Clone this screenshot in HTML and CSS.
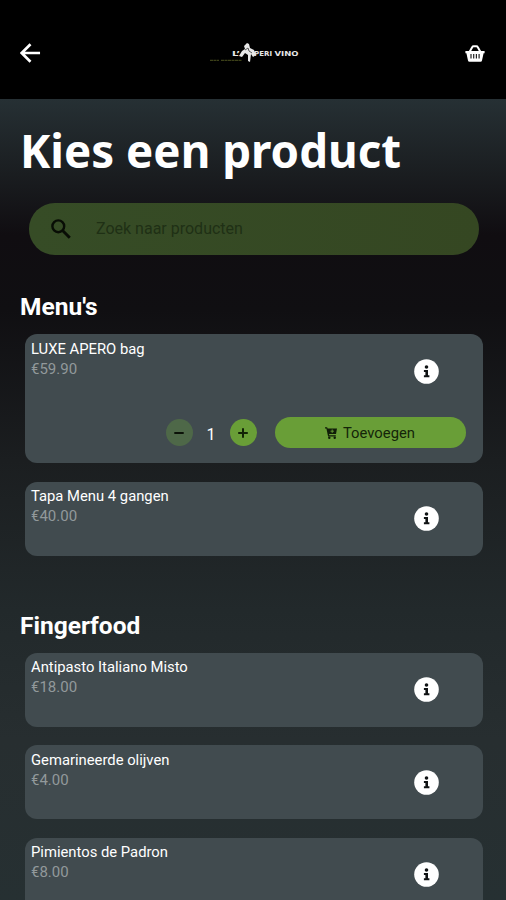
FILE: index.html
```html
<!DOCTYPE html>
<html lang="nl">
<head>
<meta charset="utf-8">
<title>Kies een product</title>
<link rel="stylesheet" href="styles.css">
</head>
<body>
<svg class="defs" aria-hidden="true">
  <symbol id="info" viewBox="0 0 25 25">
    <circle cx="12.5" cy="12.5" r="12.3" fill="#fff"/>
    <circle cx="12.5" cy="8" r="1.8" fill="#101314"/>
    <path d="M9.9 10.900h4.100v5.400h1.400v2H9.900v-2h1.500v-3.300H9.900z" fill="#101314"/>
  </symbol>
</svg>
<header class="topbar">
  <svg class="back" viewBox="0 0 22 22"><path d="M21 11H2.500M11 1.800 1.800 11l9.200 9.200" fill="none" stroke="#fff" stroke-width="2.800"/></svg>
  <svg class="logo" viewBox="0 0 92 24">
    <text class="logo-word" x="23" y="15.200" textLength="8" lengthAdjust="spacingAndGlyphs">L’</text>
    <path d="M30 15l3-5 3-2-1-3 3-3 2 1 1 4 4 2 2 5-3 2-2-3-1 8-2-1v-6l-3-2-3 4z" fill="#e8e8e8"/>
    <path d="M36 9l3-2 1 3 3 2" fill="none" stroke="#555" stroke-width="1"/>
    <text class="logo-word" x="45" y="15.200" textLength="18" lengthAdjust="spacingAndGlyphs">PERI</text>
    <text class="logo-word" x="65.500" y="15.200" textLength="24" lengthAdjust="spacingAndGlyphs">VINO</text>
    <path d="M1 19.300h9M12 19.300h21" stroke="#4b501e" stroke-width="1" stroke-dasharray="3 .5"/>
  </svg>
  <svg class="basket" viewBox="0 0 20 18"><path d="M4.500 7 7.300 2Q7.700 1.200 8.600 1.200h2.800q.9 0 1.300.8L15.500 7" fill="none" stroke="#fff" stroke-width="2"/><path d="M.4 6h19.200v2.300h-1L17 15.500q-.2 1.300-1.500 1.300h-11Q3.200 16.800 3 15.500L1.400 8.300h-1z" fill="#fff"/><path d="M6 9v4.500M8.700 9v4.500M11.400 9v4.500M14.100 9v4.500" stroke="#222" stroke-width="1.200"/></svg>
</header>
<main>
  <h1>Kies een product</h1>
  <label class="search">
    <svg viewBox="0 0 20 20"><circle cx="7.300" cy="7.300" r="5.900" fill="none" stroke="#080d05" stroke-width="2.400"/><path d="m11.800 11.800 7 7" stroke="#080d05" stroke-width="2.900"/></svg>
    <input type="text" placeholder="Zoek naar producten">
  </label>
  <section>
    <h2 class="menus">Menu's</h2>
    <article class="card open">
      <div class="row"><div><h3>LUXE APERO bag</h3><p>€59.90</p></div><svg class="info"><use href="#info"/></svg></div>
      <div class="actions">
        <button class="round off"><svg viewBox="0 0 12 12"><path d="M1.300 6h9.400" stroke="#0b1208" stroke-width="2"/></svg></button>
        <span class="qty">1</span>
        <button class="round"><svg viewBox="0 0 12 12"><path d="M1.200 6h9.600M6 1.200v9.600" stroke="#122306" stroke-width="2"/></svg></button>
        <button class="add"><svg viewBox="0 0 12 12"><path d="M0 .2h2.100l.5 1.300H12l-1 5.500H4l.3 1.200h6.500v1.300H3.100L1.400 1.500H0z" fill="#101d08"/><circle cx="4.300" cy="10.700" r="1.200" fill="#101d08"/><circle cx="9.700" cy="10.700" r="1.200" fill="#101d08"/><path d="M7.200 2.500v3.400M5.500 4.200h3.400" stroke="#699e37" stroke-width=".9"/></svg><span>Toevoegen</span></button>
      </div>
    </article>
    <article class="card"><div class="row"><div><h3>Tapa Menu 4 gangen</h3><p>€40.00</p></div><svg class="info"><use href="#info"/></svg></div></article>
  </section>
  <section class="second">
    <h2>Fingerfood</h2>
    <article class="card"><div class="row"><div><h3>Antipasto Italiano Misto</h3><p>€18.00</p></div><svg class="info"><use href="#info"/></svg></div></article>
    <article class="card"><div class="row"><div><h3>Gemarineerde olijven</h3><p>€4.00</p></div><svg class="info"><use href="#info"/></svg></div></article>
    <article class="card"><div class="row"><div><h3>Pimientos de Padron</h3><p>€8.00</p></div><svg class="info"><use href="#info"/></svg></div></article>
  </section>
</main>
</body>
</html>
```
FILE: styles.css
```css
* { box-sizing: border-box; }
body {
  margin: 0;
  height: 900px;
  overflow: hidden;
  font-family: Roboto, "Liberation Sans", sans-serif;
  color: #fff;
  background: linear-gradient(180deg, #263034 99px, #1a1d20 175px, #100d11 235px, #100f12 310px, #1b1e20 460px, #22292b 610px, #272e30 740px, #263032 900px) no-repeat #263032;
}
h1, h2, h3, p { margin: 0; }
.defs { display: none; }
.topbar {
  height: 99px;
  padding: 7px 21px 0 20px;
  display: grid;
  grid-template-columns: 1fr 92px 1fr;
  align-items: center;
  background: #000;
}
.back { width: 21px; height: 22px; }
.logo { width: 92px; height: 24px; margin-left: 2px; }
.logo-word { font: bold 6.800px "DejaVu Sans", sans-serif; fill: #e6e6e6; }
.basket { width: 20px; height: 18px; justify-self: end; margin-top: 2px; }
main { padding: 0 23px 0 25px; }
h1 {
  height: 104px;
  margin-left: -5px;
  padding-top: 19px;
  font: bold 45.700px/64px "Noto Sans", sans-serif;
  white-space: nowrap;
}
.search {
  display: flex;
  align-items: center;
  height: 52px;
  margin: 0 4px;
  padding-left: 22px;
  border-radius: 26px;
  background: linear-gradient(90deg, #364c26, #354722);
}
.search svg { width: 20px; height: 20px; }
.search input {
  width: 320px;
  margin-left: 25px;
  padding: 0;
  border: 0;
  background: none;
  font: 16px/20px Roboto, sans-serif;
}
.search input::placeholder { color: #1f3015; opacity: 1; }
h2 {
  height: 45.500px;
  margin-left: -5px;
  font-size: 24.500px;
  line-height: 37px;
}
.menus { margin-top: 34px; height: 45px; line-height: 35px; }
.second { margin-top: 51.500px; }
.card {
  height: 74px;
  padding: 4.500px 44.500px 0 6px;
  border-radius: 12px;
  background: #414b4f;
}
.card + .card { margin-top: 18.500px; }
.open { height: 129px; padding-right: 16.500px; }
.row { display: flex; justify-content: space-between; height: 44px; }
h3 { font-size: 14.800px; line-height: 20px; font-weight: 400; white-space: nowrap; }
.row p { font-size: 15px; line-height: 20px; color: #92999b; }
.info { width: 25px; height: 25px; margin-top: 20px; }
.open .info { margin-right: 28px; }
.actions { display: flex; align-items: center; margin: 34.500px 0 0 134.500px; }
button { border: 0; padding: 0; display: flex; align-items: center; justify-content: center; background: #699e37; }
.round { width: 27px; height: 27px; border-radius: 50%; }
.off { background: #4e6848; }
.round svg { width: 12px; height: 12px; }
.qty { width: 37px; padding-top: 4px; text-align: center; font-size: 16px; }
.add { width: 191px; height: 31px; margin-left: 18px; border-radius: 16px; gap: 6px; color: #142509; font: 14.800px/20px Roboto, sans-serif; }
.add svg { width: 12px; height: 12px; }
```
